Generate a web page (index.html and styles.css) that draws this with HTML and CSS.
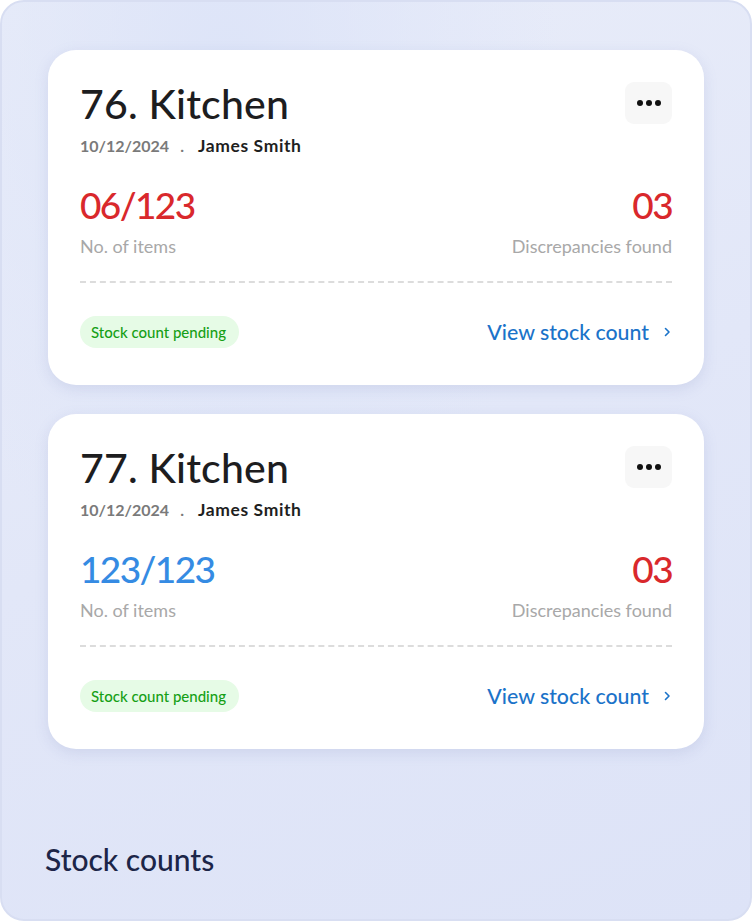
FILE: index.html
```html
<!DOCTYPE html>
<html>
<head>
<meta charset="utf-8">
<link rel="stylesheet" href="styles.css">
</head>
<body>
<div class="panel">
  <div class="list">
    <div class="card">
      <div class="head">
        <div>
          <h2 class="title">76. Kitchen</h2>
          <div class="meta"><span class="date">10/12/2024</span><span class="sep">.</span><span class="name">James Smith</span></div>
        </div>
        <button class="more"><span></span><span></span><span></span></button>
      </div>
      <div class="stats">
        <div class="stat">
          <div class="num red">06/123</div>
          <div class="label">No. of items</div>
        </div>
        <div class="stat right">
          <div class="num red">03</div>
          <div class="label">Discrepancies found</div>
        </div>
      </div>
      <div class="divider"></div>
      <div class="foot">
        <span class="badge">Stock count pending</span>
        <a class="link">View stock count <svg width="10" height="12" viewBox="0 0 10 12"><path d="M3.5 2.5 L7 6 L3.5 9.5" fill="none" stroke="#1b73c9" stroke-width="1.6" stroke-linecap="round" stroke-linejoin="round"/></svg></a>
      </div>
    </div>
    <div class="card">
      <div class="head">
        <div>
          <h2 class="title">77. Kitchen</h2>
          <div class="meta"><span class="date">10/12/2024</span><span class="sep">.</span><span class="name">James Smith</span></div>
        </div>
        <button class="more"><span></span><span></span><span></span></button>
      </div>
      <div class="stats">
        <div class="stat">
          <div class="num blue">123/123</div>
          <div class="label">No. of items</div>
        </div>
        <div class="stat right">
          <div class="num red">03</div>
          <div class="label">Discrepancies found</div>
        </div>
      </div>
      <div class="divider"></div>
      <div class="foot">
        <span class="badge">Stock count pending</span>
        <a class="link">View stock count <svg width="10" height="12" viewBox="0 0 10 12"><path d="M3.5 2.5 L7 6 L3.5 9.5" fill="none" stroke="#1b73c9" stroke-width="1.6" stroke-linecap="round" stroke-linejoin="round"/></svg></a>
      </div>
    </div>
  </div>
  <div class="caption">Stock counts</div>
</div>
</body>
</html>
```
FILE: styles.css
```css
* { box-sizing: border-box; }
html, body { margin: 0; padding: 0; background: #fff; }
body { font-family: "Lato", "Noto Sans", sans-serif; width: 752px; height: 921px; }
.panel {
  width: 752px; height: 921px;
  border: 2px solid #d8def2;
  border-radius: 24px;
  background: radial-gradient(ellipse at 30% 8%, #dde4f8 0%, rgba(221,228,248,0) 45%), linear-gradient(160deg, #e9edf9 0%, #e2e7f8 50%, #dde3f7 100%);
  padding: 48px 46px 0 46px;
  display: flex; flex-direction: column;
}
.list { display: flex; flex-direction: column; gap: 29px; }
.card {
  background: #fff;
  border-radius: 28px;
  height: 335px;
  padding: 32px 32px 0 32px;
  box-shadow: 0 4px 14px rgba(120, 135, 190, 0.18);
}
.head { display: flex; justify-content: space-between; align-items: flex-start; }
.title { margin: 0; font-size: 41px; font-weight: 500; color: #1d1d1f; line-height: 44px; letter-spacing: 0.2px; }
.meta { margin-top: 10px; font-size: 17px; line-height: 20px; display: flex; align-items: baseline; }
.date { color: #7a7a7a; font-weight: 700; font-size: 16px; }
.sep { color: #7a7a7a; margin: 0 14px 0 11px; font-weight: 700; font-size: 16px; }
.name { color: #1f1f1f; font-weight: 700; font-size: 17.5px; letter-spacing: 0.6px; }
.more {
  width: 47px; height: 42px; border: none; border-radius: 9px; background: #f7f7f7;
  display: flex; align-items: center; justify-content: center; gap: 3px; padding: 0; margin-top: 0;
}
.more span { width: 6px; height: 6px; border-radius: 50%; background: #111; display: block; }
.stats { display: flex; justify-content: space-between; margin-top: 29px; }
.stat.right { text-align: right; }
.num { font-size: 37px; font-weight: 500; line-height: 40px; letter-spacing: -1.6px; }
.red { color: #d9282c; }
.blue { color: #358be3; }
.label { font-size: 18px; color: #a8a8a8; margin-top: 10px; line-height: 22px; font-weight: 400; }
.divider { border-top: 2px dashed #dcdcdc; margin-top: 24px; }
.foot { display: flex; justify-content: space-between; align-items: center; margin-top: 33px; }
.badge {
  background: #e6fbe6; color: #16a016; font-size: 15px; font-weight: 500;
  height: 32px; line-height: 32px; padding: 0 13px 0 11px; border-radius: 16px;
}
.link { color: #1b73c9; font-size: 21.3px; font-weight: 500; display: flex; align-items: center; gap: 13px; }
.caption { margin-top: 92px; font-size: 30px; font-weight: 500; color: #1c2548; margin-left: -3px; }
```
